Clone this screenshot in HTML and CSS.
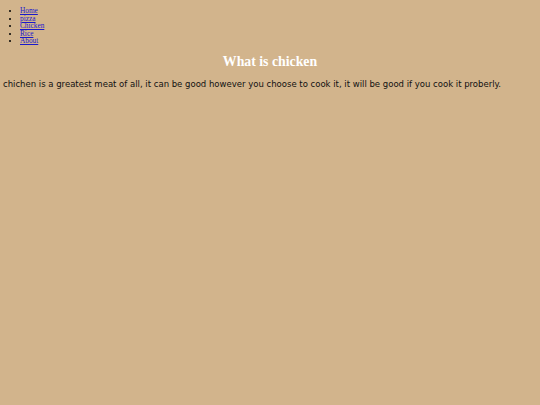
FILE: index.html
```html
<!DOCTYPE html>
<html>
<head>
<meta charset="utf-8">
<link rel="stylesheet" href="styles.css">
</head>
<body class="page">
<ul class="nav">
<li><a href="#">Home</a></li>
<li><a href="#">pizza</a></li>
<li><a href="#">Chicken</a></li>
<li><a href="#">Rice</a></li>
<li><a href="#">About</a></li>
</ul>
<h1 class="title">What is chicken</h1>
<p class="text">chichen is a greatest meat of all, it can be good however you choose to cook it, it will be good if you cook it proberly.</p>
</body>
</html>
```
FILE: styles.css
```css
html, body { background: #d2b48c; }
.page { margin: 0; padding: 7px 3px 0; font-family: "Liberation Serif", serif; }
.nav { margin: 0; padding-left: 17px; font-size: 7.3px; line-height: 7.6px; }
.nav a { color: #1a1acc; }
.title { margin: 9px 0 0; text-align: center; color: #fff; font-size: 13.8px; line-height: 16px; font-weight: bold; }
.text { margin: 9px 0 0; font-family: "DejaVu Sans", Verdana, sans-serif; font-size: 8.5px; line-height: 11px; color: #111; }
```
